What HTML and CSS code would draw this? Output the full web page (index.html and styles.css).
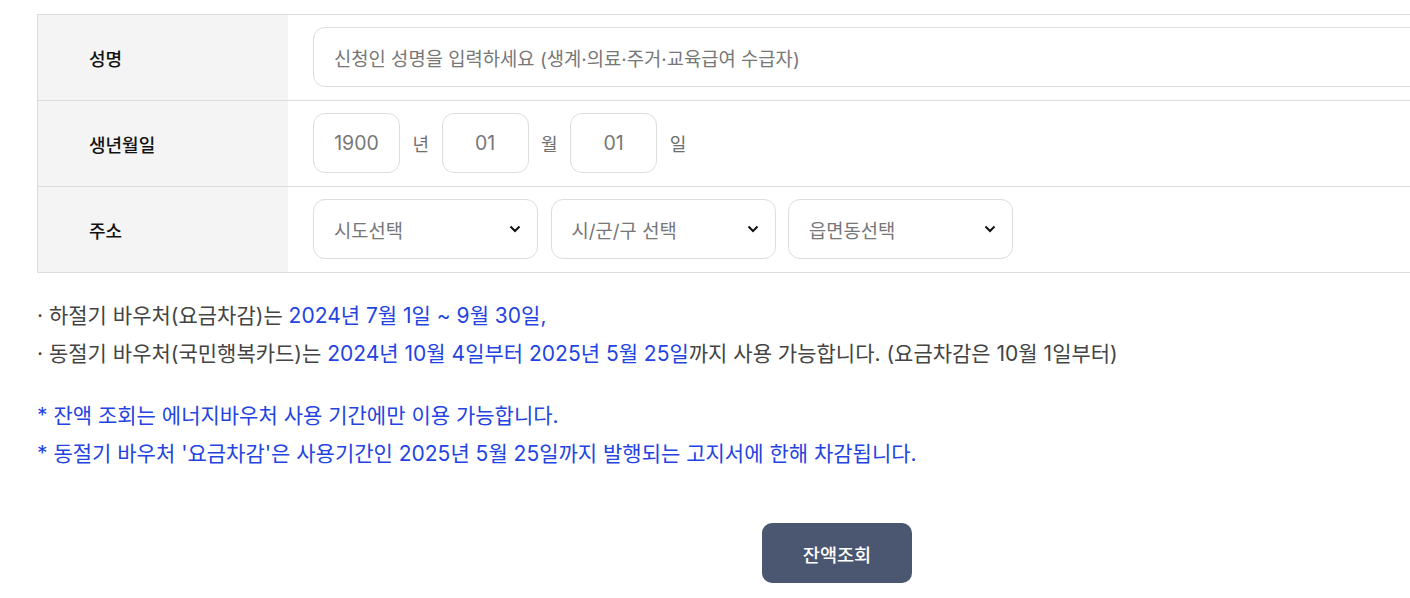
FILE: index.html
```html
<!DOCTYPE html>
<html lang="ko">
<head>
<meta charset="utf-8">
<link rel="stylesheet" href="styles.css">
</head>
<body>
<div class="wrap">
  <div class="form-table">
    <div class="row">
      <div class="label">성명</div>
      <div class="field">
        <div class="input wide">신청인 성명을 입력하세요 (생계·의료·주거·교육급여 수급자)</div>
      </div>
    </div>
    <div class="row">
      <div class="label">생년월일</div>
      <div class="field">
        <div class="input small">1900</div><span class="unit">년</span>
        <div class="input small">01</div><span class="unit">월</span>
        <div class="input small">01</div><span class="unit">일</span>
      </div>
    </div>
    <div class="row">
      <div class="label">주소</div>
      <div class="field">
        <div class="input select">시도선택<svg class="chev" viewBox="0 0 12 8" width="12" height="8"><path d="M1.5 1.5 L6 6 L10.5 1.5" fill="none" stroke="#111" stroke-width="2"/></svg></div>
        <div class="input select">시/군/구 선택<svg class="chev" viewBox="0 0 12 8" width="12" height="8"><path d="M1.5 1.5 L6 6 L10.5 1.5" fill="none" stroke="#111" stroke-width="2"/></svg></div>
        <div class="input select">읍면동선택<svg class="chev" viewBox="0 0 12 8" width="12" height="8"><path d="M1.5 1.5 L6 6 L10.5 1.5" fill="none" stroke="#111" stroke-width="2"/></svg></div>
      </div>
    </div>
  </div>

  <div class="notes">
    <p>· 하절기 바우처(요금차감)는 <span class="blue">2024년 7월 1일 ~ 9월 30일,</span></p>
    <p>· 동절기 바우처(국민행복카드)는 <span class="blue">2024년 10월 4일부터 2025년 5월 25일</span>까지 사용 가능합니다. (요금차감은 10월 1일부터)</p>
  </div>
  <div class="notes blue second">
    <p>* 잔액 조회는 에너지바우처 사용 기간에만 이용 가능합니다.</p>
    <p>* 동절기 바우처 '요금차감'은 사용기간인 2025년 5월 25일까지 발행되는 고지서에 한해 차감됩니다.</p>
  </div>

  <div class="actions">
    <button class="btn">잔액조회</button>
  </div>
</div>
</body>
</html>
```

FILE: styles.css
```css
html, body {
  margin: 0;
  padding: 0;
  overflow: hidden;
  background: #fff;
}
body {
  font-family: Inter, "Noto Sans CJK KR", sans-serif;
  color: #222;
}
.wrap {
  width: 1600px;
  margin-left: 37px;
  padding-top: 14px;
}
.form-table {
  border-top: 1px solid #dcdcdc;
  border-left: 1px solid #dcdcdc;
}
.row {
  display: flex;
  height: 85px;
  border-bottom: 1px solid #dcdcdc;
}
.label {
  width: 199px;
  flex: none;
  background: #f4f4f4;
  padding-left: 51px;
  display: flex;
  align-items: center;
  font-size: 18px;
  font-weight: 500;
  color: #111;
}
.field {
  flex: 1;
  display: flex;
  align-items: center;
  padding: 0 25px 1px;
  gap: 12.5px;
}
.input {
  box-sizing: border-box;
  height: 60px;
  border: 1px solid #dddddd;
  border-radius: 12px;
  display: flex;
  align-items: center;
  font-size: 18.8px;
  color: #777;
  background: #fff;
}
.wide {
  flex: 1;
  padding-left: 20px;
}
.small {
  width: 87px;
  justify-content: center;
  font-size: 19.5px;
}
.unit {
  font-size: 18px;
  color: #707070;
}
.select {
  width: 225px;
  padding: 0 16px 0 20px;
  justify-content: space-between;
}
.chev {
  display: block;
}
.notes {
  margin-top: 24px;
  font-size: 21px;
  color: #444;
}
.notes p {
  margin: 0;
  line-height: 37.5px;
}
.notes.second {
  margin-top: 25px;
}
.blue {
  color: #2344e2;
}
.actions {
  display: flex;
  justify-content: center;
  margin-top: 51px;
}
.btn {
  width: 150px;
  height: 60px;
  border: none;
  border-radius: 10px;
  background: #4b5670;
  color: #fff;
  font-family: Inter, "Noto Sans CJK KR", sans-serif;
  font-size: 18.6px;
  font-weight: 500;
}
```
